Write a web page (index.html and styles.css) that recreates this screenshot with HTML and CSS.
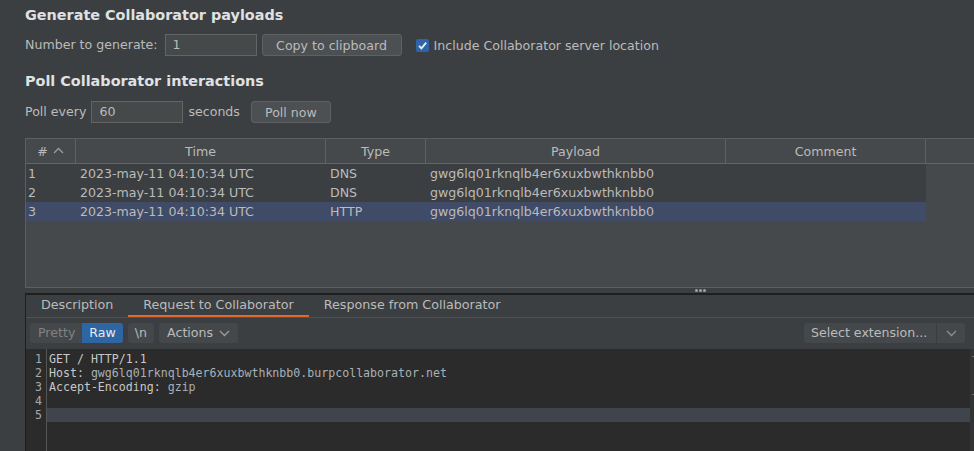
FILE: index.html
```html
<!DOCTYPE html>
<html>
<head>
<meta charset="utf-8">
<link rel="stylesheet" href="styles.css">
</head>
<body>
<div class="page">
  <section class="top">
    <h2 class="title">Generate Collaborator payloads</h2>
    <div class="row">
      <span class="label">Number to generate:</span>
      <div class="input w-num">1</div>
      <button class="btn w-copy">Copy to clipboard</button>
      <label class="check">
        <span class="box"><svg width="13" height="13" viewBox="0 0 13 13"><path d="M3 6.8 L5.4 9.4 L10.2 3.6" fill="none" stroke="#e8eef6" stroke-width="1.8"/></svg></span>
        <span>Include Collaborator server location</span>
      </label>
    </div>
    <h2 class="title t2">Poll Collaborator interactions</h2>
    <div class="row">
      <span class="label">Poll every</span>
      <div class="input w-poll">60</div>
      <span class="label sec">seconds</span>
      <button class="btn w-pollnow">Poll now</button>
    </div>
  </section>

  <div class="table">
    <div class="thead">
      <div class="th c-num"># <svg class="caret" width="11" height="7" viewBox="0 0 11 7"><path d="M1 6 L5.5 1.5 L10 6" fill="none" stroke="#9a9d9f" stroke-width="1.3"/></svg></div>
      <div class="th c-time">Time</div>
      <div class="th c-type">Type</div>
      <div class="th c-pay">Payload</div>
      <div class="th c-com">Comment</div>
      <div class="th c-rest"></div>
    </div>
    <div class="tbody">
      <div class="tr"><div class="td c-num">1</div><div class="td c-time">2023-may-11 04:10:34 UTC</div><div class="td c-type">DNS</div><div class="td c-pay">gwg6lq01rknqlb4er6xuxbwthknbb0</div><div class="td c-com"></div></div>
      <div class="tr"><div class="td c-num">2</div><div class="td c-time">2023-may-11 04:10:34 UTC</div><div class="td c-type">DNS</div><div class="td c-pay">gwg6lq01rknqlb4er6xuxbwthknbb0</div><div class="td c-com"></div></div>
      <div class="tr sel"><div class="td c-num">3</div><div class="td c-time">2023-may-11 04:10:34 UTC</div><div class="td c-type">HTTP</div><div class="td c-pay">gwg6lq01rknqlb4er6xuxbwthknbb0</div><div class="td c-com"></div></div>
    </div>
  </div>

  <div class="splitter"><span></span><span></span><span></span></div>

  <div class="lower">
    <div class="tabs">
      <div class="tab">Description</div>
      <div class="tab active">Request to Collaborator</div>
      <div class="tab">Response from Collaborator</div>
    </div>
    <div class="toolbar">
      <div class="seg">
        <span class="seg-item dim">Pretty</span>
        <span class="seg-item on">Raw</span>
      </div>
      <span class="tbtn">\n</span>
      <span class="tbtn actions">Actions <svg width="11" height="7" viewBox="0 0 11 7"><path d="M1 1 L5.5 5.5 L10 1" fill="none" stroke="#9a9d9f" stroke-width="1.3"/></svg></span>
      <span class="grow"></span>
      <div class="select">
        <span class="select-text">Select extension...</span>
        <span class="select-arrow"><svg width="11" height="7" viewBox="0 0 11 7"><path d="M1 1 L5.5 5.5 L10 1" fill="none" stroke="#8c8f91" stroke-width="1.3"/></svg></span>
      </div>
    </div>
    <div class="editor">
      <div class="gutter">
        <div>1</div><div>2</div><div>3</div><div>4</div><div>5</div>
      </div>
      <div class="code">
        <div class="ln">GET / HTTP/1.1</div>
        <div class="ln">Host: <span class="val">gwg6lq01rknqlb4er6xuxbwthknbb0.burpcollaborator.net</span></div>
        <div class="ln">Accept-Encoding: <span class="val">gzip</span></div>
        <div class="ln"></div>
        <div class="ln cur"></div>
      </div>
      <div class="vscroll"><i class="m1"></i><i class="m2"></i></div>
    </div>
  </div>
</div>
</body>
</html>
```
FILE: styles.css
```css
* { box-sizing: border-box; }
html, body { margin: 0; padding: 0; }
body {
  background: #3c3f41;
  color: #bbbbbb;
  font-family: "DejaVu Sans", sans-serif;
  font-size: 12.6px;
  width: 974px;
  height: 451px;
  overflow: hidden;
}
.page { padding-left: 25px; }

.top { padding-top: 4px; }
.title {
  margin: 0;
  font-size: 14.4px;
  font-weight: bold;
  color: #dfe1e3;
  line-height: 22px;
  height: 22px;
}
.t2 { margin-top: 14px; }
.row {
  display: flex;
  align-items: center;
  height: 22px;
  margin-top: 8px;
}
.t2 + .row { margin-top: 9px; }
.label { line-height: 22px; white-space: nowrap; }
.input {
  height: 22px;
  border: 1px solid #646464;
  background: #45494a;
  padding: 0 7px;
  line-height: 20px;
  color: #bbbbbb;
  margin-left: 7px;
}
.w-num { width: 92px; }
.w-poll { width: 92px; margin-left: 5px; }
.sec { margin-left: 5px; }
.btn {
  height: 22px;
  border: 1px solid #5e6163;
  background: #4c5052;
  border-radius: 3px;
  color: #bbbbbb;
  font-family: inherit;
  font-size: 12.6px;
  padding: 0;
  margin-left: 5px;
}
.w-copy { width: 140px; }
.w-pollnow { width: 80px; margin-left: 11px; }
.check { display: flex; align-items: center; margin-left: 14px; white-space: nowrap; }
.box {
  width: 13px; height: 13px;
  background: #2f65a8;
  border-radius: 2px;
  margin-right: 5px;
  display: flex;
}

.table {
  margin-top: 15px;
  height: 150px;
  border: 1px solid #5c5f61;
  border-right: none;
  background: #46494b;
}
.thead {
  display: flex;
  height: 25px;
  border-bottom: 1px solid #626567;
  background: #46494b;
}
.th {
  display: flex;
  align-items: center;
  justify-content: center;
  height: 24px;
  border-right: 1px solid #5e6163;
}
.th.c-rest { border-right: none; flex: 1; }
.c-num { width: 50px; }
.c-time { width: 250px; }
.c-type { width: 100px; }
.c-pay { width: 300px; }
.c-com { width: 200px; }
.caret { margin-left: 5px; margin-top: -2px; }
.tbody { width: 900px; }
.tr {
  display: flex;
  height: 19px;
  background: #3c3f41;
  line-height: 19px;
}
.tr.sel { background: #404b67; }
.td { white-space: nowrap; overflow: hidden; }
.td.c-num { padding-left: 2px; }
.td.c-time { padding-left: 4px; }
.td.c-type { padding-left: 4px; }
.td.c-pay { padding-left: 4px; }

.splitter {
  height: 5px;
  display: flex;
  justify-content: center;
  align-items: center;
  gap: 1px;
  margin-left: 675px;
  width: 0;
}
.splitter span {
  width: 3px; height: 3px; border-radius: 50%; background: #a0a3a5; flex: none;
}

.lower {
  border-top: 2px solid #1f1f1f;
  border-left: 1px solid #1f1f1f;
  height: 160px;
}
.tabs {
  display: flex;
  height: 23px;
  border-bottom: 1px solid #4e5254;
  font-size: 12.7px;
}
.tab {
  padding: 0 15px;
  line-height: 19px;
  height: 22px;
  color: #bbbbbb;
  white-space: nowrap;
}
.tab.active { border-bottom: 2px solid #e2682d; }
.toolbar {
  display: flex;
  align-items: center;
  height: 31px;
  padding: 0 5px 1px 4px;
  margin-right: 4px;
}
.seg {
  display: flex;
  height: 20px;
  background: #45484a;
  border-radius: 3px;
  overflow: hidden;
}
.seg-item { padding: 0 7px; line-height: 20px; }
.seg-item.dim { color: #7f8284; padding: 0 7px 0 8px; }
.seg-item.on { background: #2e65a3; color: #e8eaec; padding: 0 7px; }
.tbtn {
  height: 20px;
  line-height: 20px;
  background: #45484a;
  border-radius: 3px;
  padding: 0 7px;
  margin-left: 5px;
  white-space: nowrap;
}
.actions { display: flex; align-items: center; gap: 6px; margin-left: 5px; padding: 0 8px; }
.grow { flex: 1; }
.select {
  display: flex;
  height: 20px;
  background: #45484a;
  border-radius: 3px;
}
.select-text { padding: 0 7px; line-height: 20px; width: 132px; white-space: nowrap; }
.select-arrow {
  width: 29px;
  border-left: 1px solid #3a3d3f;
  display: flex; align-items: center; justify-content: center;
}

.editor {
  display: flex;
  background: #2b2b2b;
  height: 104px;
  font-family: "DejaVu Sans Mono", monospace;
  font-size: 11.6px;
  color: #bbbbbb;
}
.gutter {
  width: 21px;
  padding-top: 3px;
  text-align: right;
  padding-right: 4px;
  border-right: 1px solid #555555;
  color: #a9a9a9;
}
.gutter div, .ln { height: 14px; line-height: 14px; }
.code { flex: 1; padding-top: 3px; }
.ln { padding-left: 2px; white-space: pre; color: #c8c8c8; }
.ln .val { color: #a9b0b6; }
.ln.cur { background: #40444c; }
.vscroll { width: 4px; background: #313335; position: relative; }
.vscroll i { position: absolute; left: 2px; width: 3px; height: 1px; background: #6a6d70; }
.vscroll .m1 { top: 7px; }
.vscroll .m2 { top: 45px; }
```
